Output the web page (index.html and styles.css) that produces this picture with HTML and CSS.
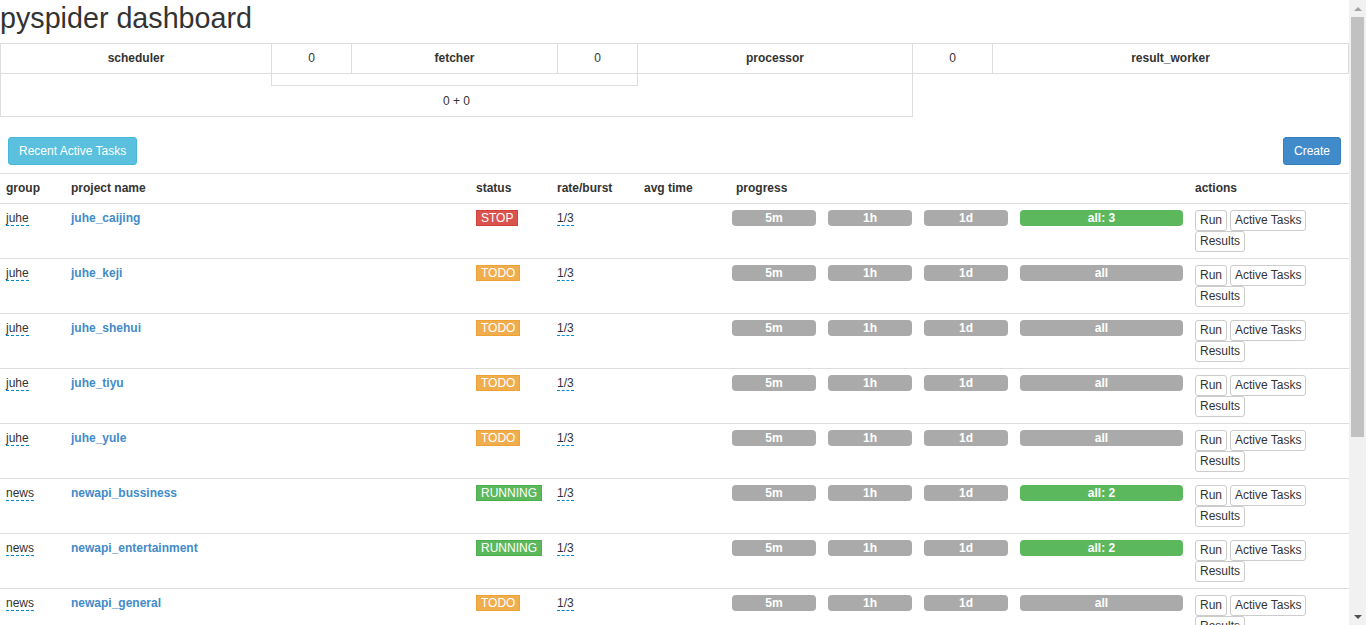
FILE: index.html
```html
<!DOCTYPE html>
<html>
<head>
<meta charset="utf-8">
<title>pyspider dashboard</title>
<link rel="stylesheet" href="styles.css">
</head>
<body>
<div class="page">
<h1 class="title">pyspider dashboard</h1>
<table class="global">
  <colgroup>
    <col class="gc-sched"><col class="gc-num"><col class="gc-fetch"><col class="gc-num"><col class="gc-proc"><col class="gc-num"><col class="gc-result">
  </colgroup>
  <tr>
    <th>scheduler</th>
    <td>0</td>
    <th>fetcher</th>
    <td>0</td>
    <th>processor</th>
    <td>0</td>
    <th>result_worker</th>
  </tr>
  <tr>
    <td colspan="5" class="g-queue">
      <div class="queue-bar"></div>
      <div class="queue-text">0 + 0</div>
    </td>
  </tr>
</table>

<div class="toolbar">
  <button class="btn btn-info">Recent Active Tasks</button>
  <button class="btn btn-primary">Create</button>
</div>

<table class="projects">
  <colgroup>
    <col class="c-group"><col class="c-name"><col class="c-status"><col class="c-rate"><col class="c-avg"><col class="c-progress"><col class="c-actions">
  </colgroup>
  <thead>
    <tr>
      <th>group</th>
      <th>project name</th>
      <th>status</th>
      <th>rate/burst</th>
      <th>avg time</th>
      <th>progress</th>
      <th>actions</th>
    </tr>
  </thead>
  <tbody>
    <tr>
      <td><span class="editable">juhe</span></td>
      <td><a class="pname">juhe_caijing</a></td>
      <td><span class="status status-stop">STOP</span></td>
      <td><span class="editable">1/3</span></td>
      <td></td>
      <td class="progress-cell"><div class="bars"><span class="bar">5m</span><span class="bar">1h</span><span class="bar">1d</span><span class="bar bar-all bar-ok">all: 3</span></div></td>
      <td><div class="actions"><button class="btn-xs">Run</button><button class="btn-xs">Active Tasks</button><button class="btn-xs">Results</button></div></td>
    </tr>
    <tr>
      <td><span class="editable">juhe</span></td>
      <td><a class="pname">juhe_keji</a></td>
      <td><span class="status status-todo">TODO</span></td>
      <td><span class="editable">1/3</span></td>
      <td></td>
      <td class="progress-cell"><div class="bars"><span class="bar">5m</span><span class="bar">1h</span><span class="bar">1d</span><span class="bar bar-all">all</span></div></td>
      <td><div class="actions"><button class="btn-xs">Run</button><button class="btn-xs">Active Tasks</button><button class="btn-xs">Results</button></div></td>
    </tr>
    <tr>
      <td><span class="editable">juhe</span></td>
      <td><a class="pname">juhe_shehui</a></td>
      <td><span class="status status-todo">TODO</span></td>
      <td><span class="editable">1/3</span></td>
      <td></td>
      <td class="progress-cell"><div class="bars"><span class="bar">5m</span><span class="bar">1h</span><span class="bar">1d</span><span class="bar bar-all">all</span></div></td>
      <td><div class="actions"><button class="btn-xs">Run</button><button class="btn-xs">Active Tasks</button><button class="btn-xs">Results</button></div></td>
    </tr>
    <tr>
      <td><span class="editable">juhe</span></td>
      <td><a class="pname">juhe_tiyu</a></td>
      <td><span class="status status-todo">TODO</span></td>
      <td><span class="editable">1/3</span></td>
      <td></td>
      <td class="progress-cell"><div class="bars"><span class="bar">5m</span><span class="bar">1h</span><span class="bar">1d</span><span class="bar bar-all">all</span></div></td>
      <td><div class="actions"><button class="btn-xs">Run</button><button class="btn-xs">Active Tasks</button><button class="btn-xs">Results</button></div></td>
    </tr>
    <tr>
      <td><span class="editable">juhe</span></td>
      <td><a class="pname">juhe_yule</a></td>
      <td><span class="status status-todo">TODO</span></td>
      <td><span class="editable">1/3</span></td>
      <td></td>
      <td class="progress-cell"><div class="bars"><span class="bar">5m</span><span class="bar">1h</span><span class="bar">1d</span><span class="bar bar-all">all</span></div></td>
      <td><div class="actions"><button class="btn-xs">Run</button><button class="btn-xs">Active Tasks</button><button class="btn-xs">Results</button></div></td>
    </tr>
    <tr>
      <td><span class="editable">news</span></td>
      <td><a class="pname">newapi_bussiness</a></td>
      <td><span class="status status-running">RUNNING</span></td>
      <td><span class="editable">1/3</span></td>
      <td></td>
      <td class="progress-cell"><div class="bars"><span class="bar">5m</span><span class="bar">1h</span><span class="bar">1d</span><span class="bar bar-all bar-ok">all: 2</span></div></td>
      <td><div class="actions"><button class="btn-xs">Run</button><button class="btn-xs">Active Tasks</button><button class="btn-xs">Results</button></div></td>
    </tr>
    <tr>
      <td><span class="editable">news</span></td>
      <td><a class="pname">newapi_entertainment</a></td>
      <td><span class="status status-running">RUNNING</span></td>
      <td><span class="editable">1/3</span></td>
      <td></td>
      <td class="progress-cell"><div class="bars"><span class="bar">5m</span><span class="bar">1h</span><span class="bar">1d</span><span class="bar bar-all bar-ok">all: 2</span></div></td>
      <td><div class="actions"><button class="btn-xs">Run</button><button class="btn-xs">Active Tasks</button><button class="btn-xs">Results</button></div></td>
    </tr>
    <tr>
      <td><span class="editable">news</span></td>
      <td><a class="pname">newapi_general</a></td>
      <td><span class="status status-todo">TODO</span></td>
      <td><span class="editable">1/3</span></td>
      <td></td>
      <td class="progress-cell"><div class="bars"><span class="bar">5m</span><span class="bar">1h</span><span class="bar">1d</span><span class="bar bar-all">all</span></div></td>
      <td><div class="actions"><button class="btn-xs">Run</button><button class="btn-xs">Active Tasks</button><button class="btn-xs">Results</button></div></td>
    </tr>
    <tr>
      <td><span class="editable">news</span></td>
      <td><a class="pname">newapi_health</a></td>
      <td><span class="status status-todo">TODO</span></td>
      <td><span class="editable">1/3</span></td>
      <td></td>
      <td class="progress-cell"><div class="bars"><span class="bar">5m</span><span class="bar">1h</span><span class="bar">1d</span><span class="bar bar-all">all</span></div></td>
      <td><div class="actions"><button class="btn-xs">Run</button><button class="btn-xs">Active Tasks</button><button class="btn-xs">Results</button></div></td>
    </tr>
    <tr>
      <td><span class="editable">news</span></td>
      <td><a class="pname">newapi_science</a></td>
      <td><span class="status status-todo">TODO</span></td>
      <td><span class="editable">1/3</span></td>
      <td></td>
      <td class="progress-cell"><div class="bars"><span class="bar">5m</span><span class="bar">1h</span><span class="bar">1d</span><span class="bar bar-all">all</span></div></td>
      <td><div class="actions"><button class="btn-xs">Run</button><button class="btn-xs">Active Tasks</button><button class="btn-xs">Results</button></div></td>
    </tr>
  </tbody>
</table>
</div>
<div class="scrollbar" aria-hidden="true">
  <div class="sb-btn"><span class="sb-arrow sb-up"></span></div>
  <div class="sb-track"><div class="sb-thumb"></div></div>
  <div class="sb-btn"><span class="sb-arrow sb-down"></span></div>
</div>
</body>
</html>
```

FILE: styles.css
```css
html, body {
  margin: 0;
  padding: 0;
}

body {
  font-family: "Liberation Sans", Arial, Helvetica, sans-serif;
  font-size: 12px;
  line-height: 17px;
  color: #333;
  background: #fff;
}

.page {
  margin-right: 17px;
  padding-bottom: 16px;
}

/* simulated browser scrollbar */
.scrollbar {
  position: fixed;
  top: 0;
  right: 0;
  width: 17px;
  height: 100vh;
  background: #f1f1f1;
  display: flex;
  flex-direction: column;
}

.sb-btn {
  height: 17px;
  display: flex;
  align-items: center;
  justify-content: center;
  flex: none;
}

.sb-arrow {
  width: 0;
  height: 0;
  border-left: 4px solid transparent;
  border-right: 4px solid transparent;
}

.sb-up {
  border-bottom: 4px solid #a3a3a3;
}

.sb-down {
  border-top: 4px solid #505050;
}

.sb-track {
  flex: 1;
  padding: 0 2px;
}

.sb-thumb {
  height: 420px;
  background: #c1c1c1;
}

.title {
  font-size: 28.7px;
  font-weight: normal;
  line-height: 31px;
  margin: 3px 0 9px;
}

/* global info table */
.global {
  width: 100%;
  border-collapse: collapse;
  table-layout: fixed;
}

.gc-sched { width: 271px; }
.gc-num { width: 80px; }
.gc-fetch { width: 206px; }
.gc-proc { width: 275px; }

.global th,
.global td {
  border: 1px solid #ddd;
  padding: 6px;
  text-align: center;
  line-height: 17px;
  font-weight: normal;
}

.global th {
  font-weight: bold;
}

.global td.g-queue {
  padding: 0;
}

.queue-bar {
  box-sizing: border-box;
  margin-left: 270px;
  width: 367px;
  height: 12px;
  border: 1px solid #ddd;
  border-top: 0;
}

.queue-text {
  padding: 7px 0 6px;
  text-align: center;
}

/* toolbar */
.toolbar {
  display: flex;
  justify-content: space-between;
  align-items: center;
  padding: 20px 8px 8px;
}

.btn {
  font-family: inherit;
  font-size: 12px;
  line-height: 16px;
  padding: 5px 10px;
  border-radius: 3px;
  border: 1px solid transparent;
  color: #fff;
  cursor: pointer;
}

.btn-info {
  background: #5bc0de;
  border-color: #46b8da;
}

.btn-primary {
  background: #428bca;
  border-color: #357ebd;
}

/* projects table */
.projects {
  width: 100%;
  border-collapse: collapse;
  table-layout: fixed;
}

.c-group { width: 65px; }
.c-name { width: 405px; }
.c-status { width: 81px; }
.c-rate { width: 87px; }
.c-avg { width: 92px; }
.c-progress { width: 459px; }

.projects th,
.projects td {
  padding: 6px;
  text-align: left;
  vertical-align: top;
  border-top: 1px solid #ddd;
  line-height: 17px;
}

.projects thead th {
  font-weight: bold;
  border-bottom: 1px solid #ddd;
}

.editable {
  border-bottom: 1px dashed #0088cc;
  color: #333;
}

.pname {
  color: #428bca;
  font-weight: bold;
  text-decoration: none;
  cursor: pointer;
}

.status {
  display: inline-block;
  vertical-align: top;
  color: #fff;
  font-size: 12px;
  line-height: 14px;
  padding: 0 4px;
  border: 1px solid;
}

.status-stop {
  background: #d9534f;
  border-color: #d43f3a;
}

.status-todo {
  background: #f0ad4e;
  border-color: #eea236;
}

.status-running {
  background: #5cb85c;
  border-color: #4cae4c;
}

.projects td.progress-cell {
  padding-left: 2px;
}

.bars {
  display: flex;
  gap: 12px;
}

.bar {
  width: 84px;
  height: 16px;
  line-height: 16px;
  border-radius: 4px;
  background: #aaa;
  color: #fff;
  font-weight: bold;
  text-align: center;
}

.bar-all {
  flex: 1;
}

.bar-ok {
  background: #5cb85c;
}

.actions {
  display: flex;
  flex-wrap: wrap;
  column-gap: 3px;
  row-gap: 0;
}

.btn-xs {
  font-family: inherit;
  font-size: 12px;
  line-height: 17px;
  padding: 1px 4px;
  background: #fff;
  color: #333;
  border: 1px solid #ccc;
  border-radius: 3px;
  cursor: pointer;
}
```
